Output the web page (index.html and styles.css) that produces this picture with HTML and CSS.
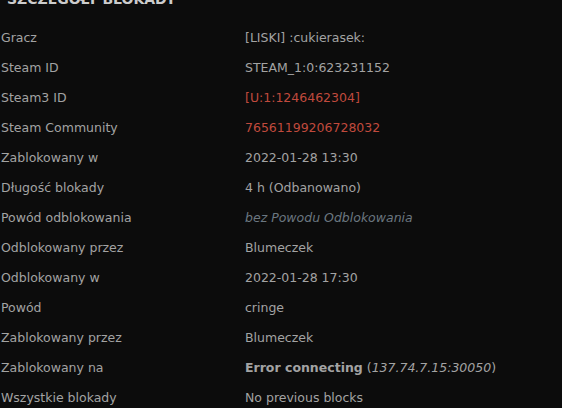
FILE: index.html
```html
<!DOCTYPE html>
<html lang="pl">
<head>
    <meta charset="UTF-8">
    <title>Szczegóły blokady</title>
    <link rel="stylesheet" href="styles.css">
</head>
<body>
    <div class="ban-details">
        <h3 class="ban-title">Szczegóły blokady</h3>
        <table class="ban-table">
            <tr><td>Gracz</td><td>[LISKI] :cukierasek:</td></tr>
            <tr><td>Steam ID</td><td>STEAM_1:0:623231152</td></tr>
            <tr><td>Steam3 ID</td><td><a class="red-link" href="#">[U:1:1246462304]</a></td></tr>
            <tr><td>Steam Community</td><td><a class="red-link" href="#">76561199206728032</a></td></tr>
            <tr><td>Zablokowany w</td><td>2022-01-28 13:30</td></tr>
            <tr><td>Długość blokady</td><td>4 h (Odbanowano)</td></tr>
            <tr><td>Powód odblokowania</td><td><i class="muted">bez Powodu Odblokowania</i></td></tr>
            <tr><td>Odblokowany przez</td><td>Blumeczek</td></tr>
            <tr><td>Odblokowany w</td><td>2022-01-28 17:30</td></tr>
            <tr><td>Powód</td><td>cringe</td></tr>
            <tr><td>Zablokowany przez</td><td>Blumeczek</td></tr>
            <tr><td>Zablokowany na</td><td><b>Error connecting</b> (<i>137.74.7.15:30050</i>)</td></tr>
            <tr><td>Wszystkie blokady</td><td>No previous blocks</td></tr>
        </table>
    </div>
</body>
</html>
```

FILE: styles.css
```css
:root {
    --background-color: #0c0c0c;
    --text-color: #a3a3a3;
    --title-color: #cccccc;
    --red-color: #c04a3d;
    --muted-color: #6b7780;
}

* {
    margin: 0;
    padding: 0;
    box-sizing: border-box;
}

body {
    background-color: var(--background-color);
    color: var(--text-color);
    font-family: 'DejaVu Sans', Verdana, sans-serif;
    font-size: 12.5px;
    overflow: hidden;
}

.ban-details {
    margin-top: -11px;
}

.ban-title {
    font-size: 14px;
    font-weight: bold;
    text-transform: uppercase;
    color: var(--title-color);
    padding-left: 7px;
    height: 20px;
    line-height: 20px;
    margin-bottom: 13px;
}

.ban-table {
    border-collapse: collapse;
    width: 100%;
}

.ban-table td {
    height: 30px;
    padding: 0 0 0 1px;
    vertical-align: middle;
    white-space: nowrap;
}

.ban-table td:first-child {
    width: 244px;
}

.red-link {
    color: var(--red-color);
    text-decoration: none;
}

.muted {
    color: var(--muted-color);
}
```
